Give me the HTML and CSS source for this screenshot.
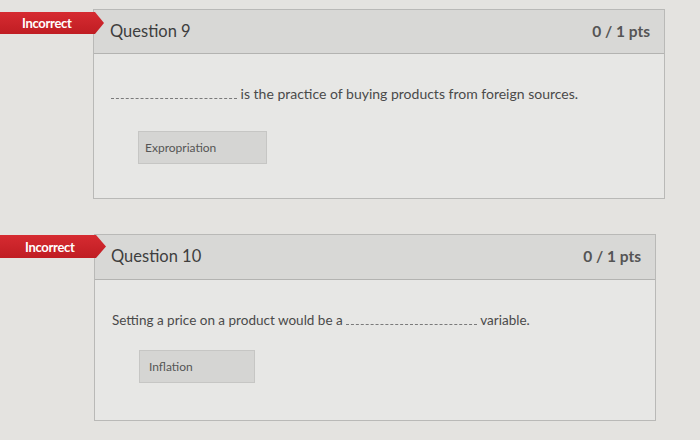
FILE: index.html
```html
<!DOCTYPE html>
<html>
<head>
<meta charset="utf-8">
<link rel="stylesheet" href="styles.css">
</head>
<body>
<div class="page">
  <div class="question q1">
    <div class="badge">Incorrect</div>
    <div class="card">
      <div class="card-head">
        <span class="title">Question 9</span>
        <span class="pts">0 / 1 pts</span>
      </div>
      <div class="card-body">
        <p class="prompt"><span class="blank"></span> is the practice of buying products from foreign sources.</p>
        <div class="answer">Expropriation</div>
      </div>
    </div>
  </div>
  <div class="question q2">
    <div class="badge">Incorrect</div>
    <div class="card">
      <div class="card-head">
        <span class="title">Question 10</span>
        <span class="pts">0 / 1 pts</span>
      </div>
      <div class="card-body">
        <p class="prompt">Setting a price on a product would be a <span class="blank"></span> variable.</p>
        <div class="answer answer-short">Inflation</div>
      </div>
    </div>
  </div>
</div>
</body>
</html>
```

FILE: styles.css
```css
html, body {
  margin: 0;
  padding: 0;
}
body {
  width: 700px;
  height: 440px;
  overflow: hidden;
  background: #e4e3e0;
  font-family: Lato, "Open Sans", sans-serif;
  color: #4b4b4b;
}
.page {
  display: flex;
  flex-direction: column;
  gap: 35px;
  padding-top: 9px;
}
.question {
  position: relative;
  margin-left: 93px;
}
.q1 .card {
  width: 572px;
}
.q2 {
  margin-left: 94px;
}
.q2 .card {
  width: 562px;
}
.card {
  border: 1px solid #b9b9b7;
  background: #e7e7e5;
  box-sizing: border-box;
}
.card-head {
  display: flex;
  justify-content: space-between;
  align-items: center;
  height: 44px;
  padding: 0 14px 2px 16px;
  box-sizing: border-box;
  background: #d8d8d6;
  border-bottom: 1px solid #b3b3b1;
}
.q2 .card-head {
  height: 45px;
}
.title {
  font-size: 16.5px;
  color: #3e3e3e;
}
.pts {
  font-size: 15.5px;
  font-weight: 700;
  color: #555;
}
.card-body {
  padding: 30px 17px 34px;
}
.q2 .card-body {
  padding-bottom: 37px;
}
.prompt {
  margin: 0;
  font-size: 14px;
  line-height: 20px;
  color: #4a4a4a;
}
.q2 .prompt {
  font-size: 13.5px;
}
.blank {
  display: inline-block;
  width: 126px;
  height: 6px;
  border-bottom: 1px dashed #7a7a7a;
}
.q2 .blank {
  width: 131px;
}
.answer {
  margin: 27px 0 0 27px;
  width: 129px;
  height: 33px;
  box-sizing: border-box;
  padding: 0 6px;
  display: flex;
  align-items: center;
  background: #d5d5d3;
  border: 1px solid #c6c6c4;
  font-size: 12px;
  color: #555;
}
.answer-short {
  width: 116px;
  padding-left: 9px;
}
.q2 .answer {
  margin-top: 20px;
}
.badge {
  position: absolute;
  top: 3px;
  left: -93px;
  width: 104px;
  height: 22px;
  box-sizing: border-box;
  padding-left: 22px;
  display: flex;
  align-items: center;
  background: linear-gradient(#d62b31, #c01d23);
  clip-path: polygon(0 0, 95px 0, 104px 50%, 95px 100%, 0 100%);
  color: #fff;
  font-size: 13px;
  font-weight: 700;
  letter-spacing: -0.3px;
}
.q2 .badge {
  top: 1px;
  left: -94px;
  height: 23px;
  width: 106px;
  padding-left: 25px;
  clip-path: polygon(0 0, 96px 0, 106px 50%, 96px 100%, 0 100%);
}
```
